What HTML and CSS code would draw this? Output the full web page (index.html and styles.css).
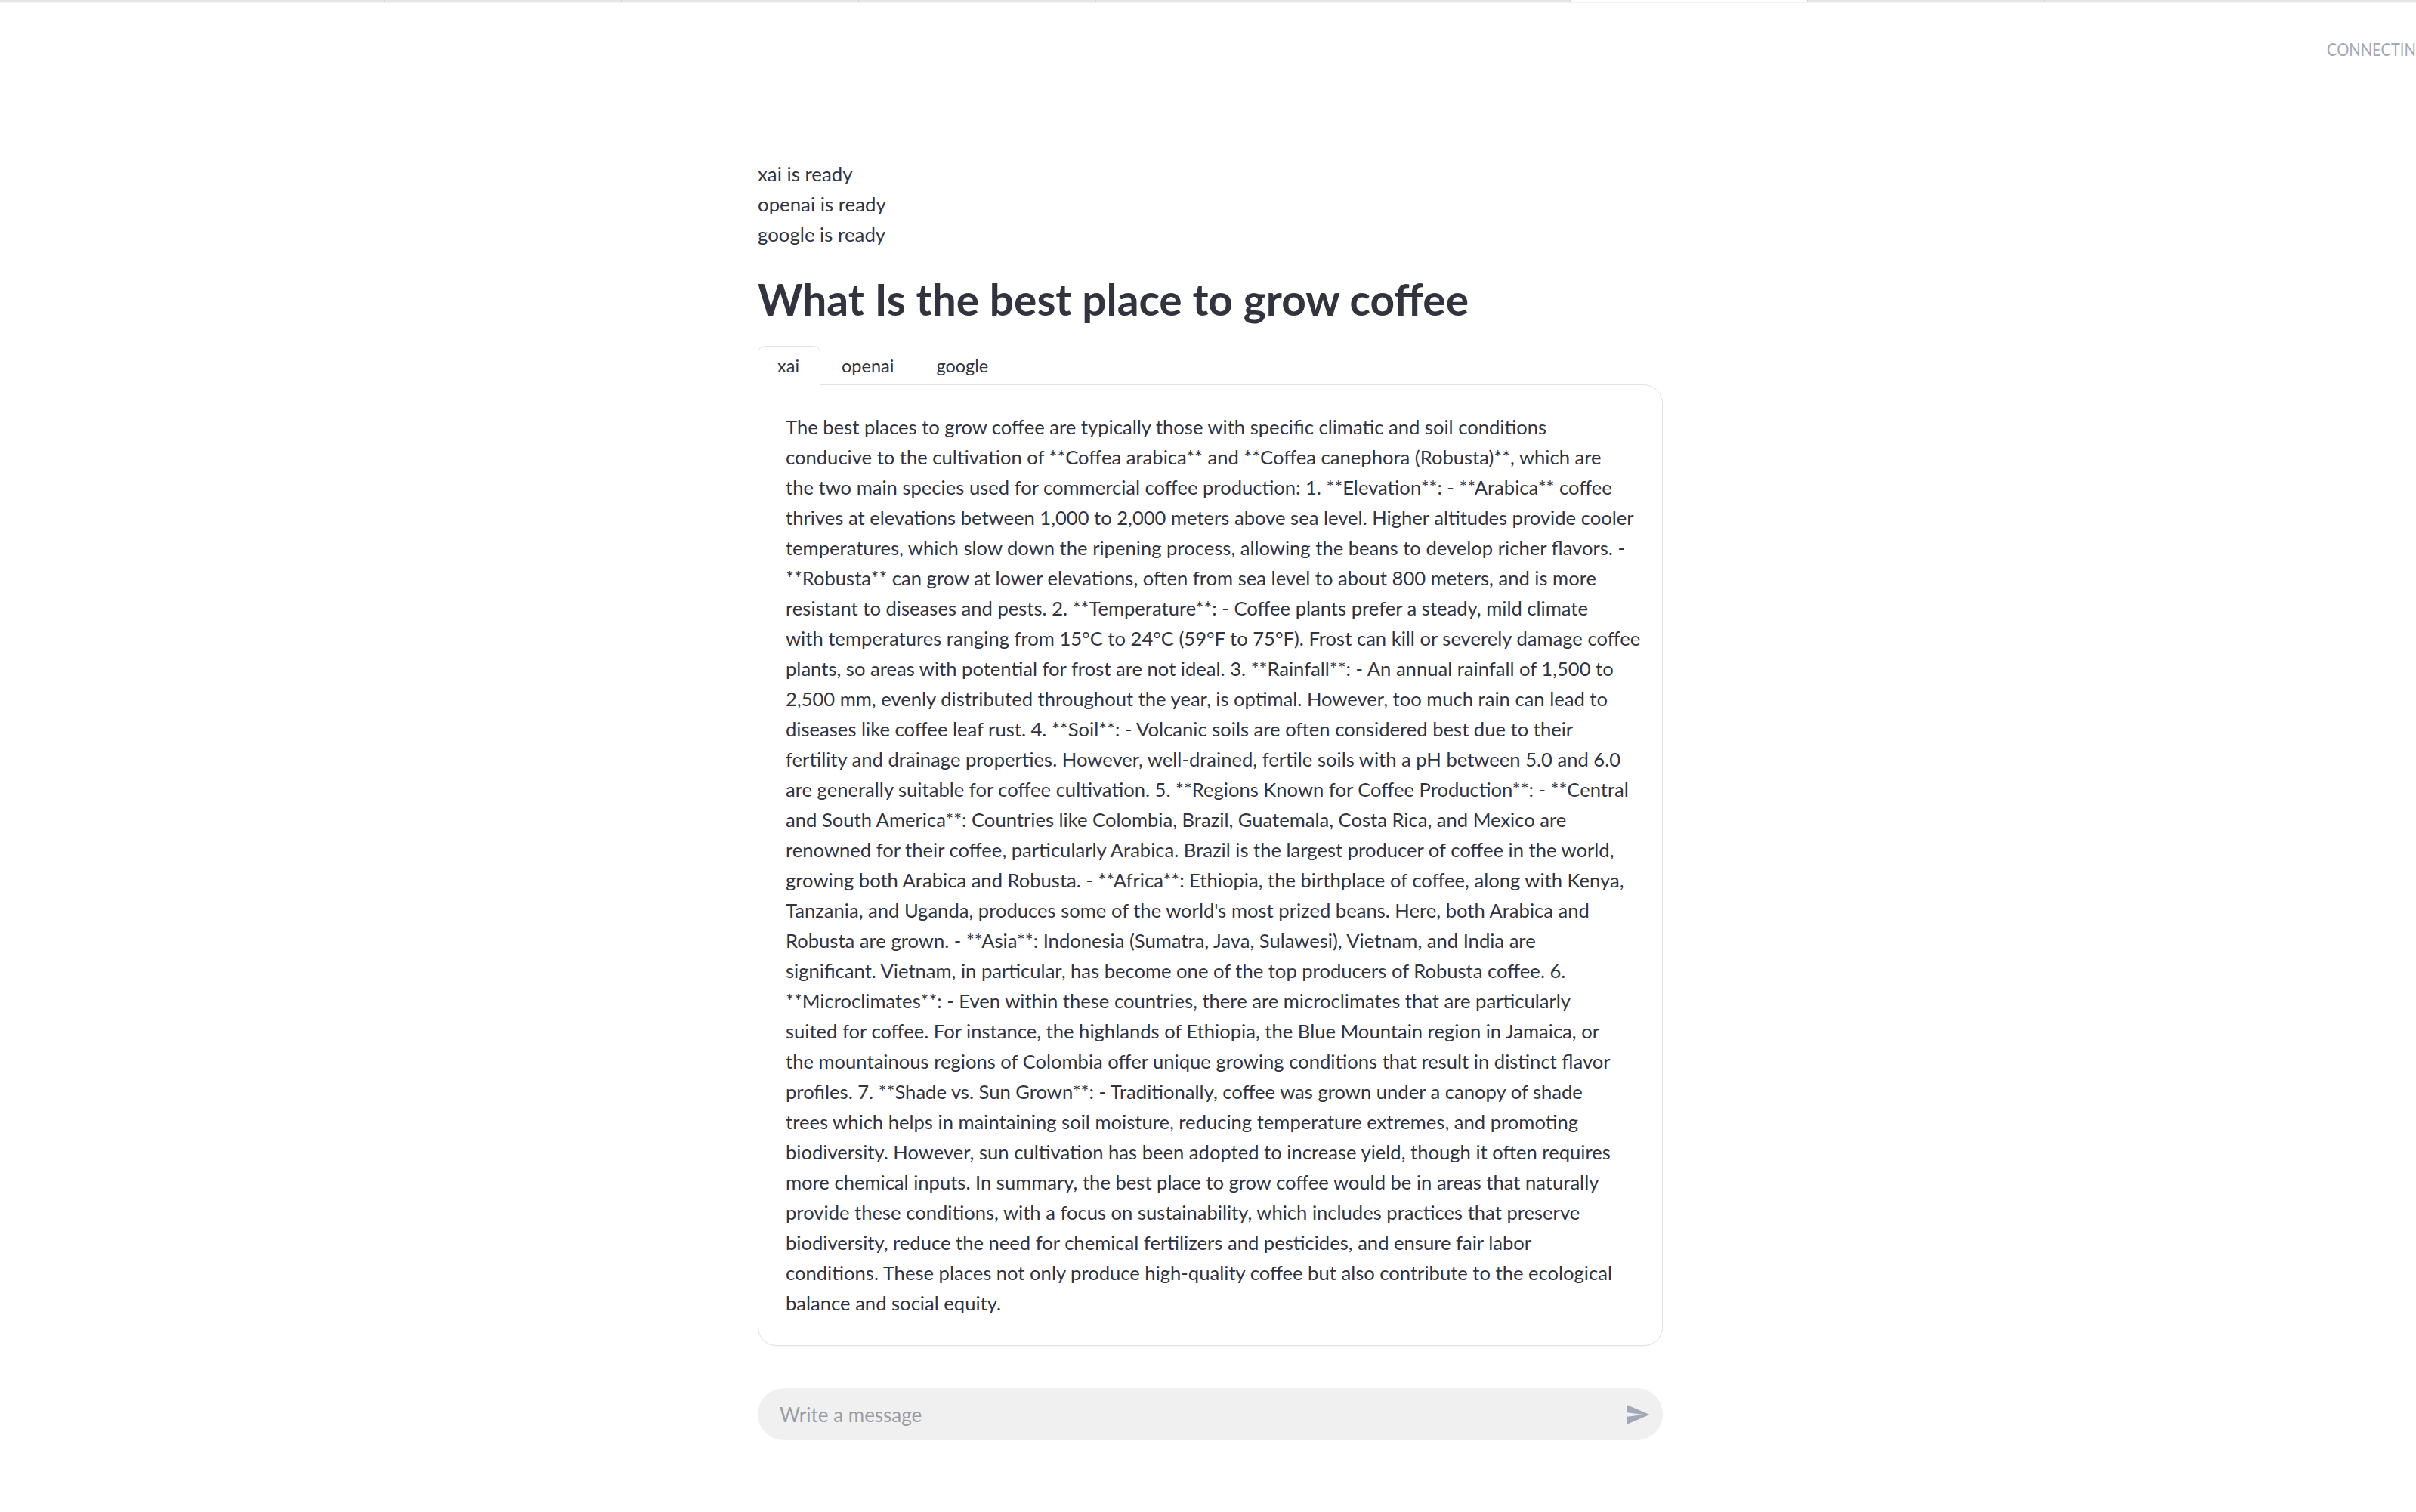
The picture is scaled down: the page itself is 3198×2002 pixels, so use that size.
FILE: index.html
```html
<!DOCTYPE html>
<html lang="en">
<head>
<meta charset="utf-8">
<title>Coffee</title>
<link rel="stylesheet" href="styles.css">
</head>
<body>
<div class="topstrip">
  <span class="seg"></span><span class="seg"></span><span class="seg"></span><span class="seg"></span><span class="seg"></span><span class="seg"></span><span class="seg"></span><span class="seg seg-active"></span><span class="seg"></span><span class="seg"></span><span class="seg"></span>
</div>
<div class="status">CONNECTING</div>
<main class="main">
  <div class="ready">
    <p>xai is ready</p>
    <p>openai is ready</p>
    <p>google is ready</p>
  </div>
  <h1 class="title">What Is the best place to grow coffee</h1>
  <div class="tabs">
    <div class="tab tab-active">xai</div>
    <div class="tab">openai</div>
    <div class="tab">google</div>
  </div>
  <div class="card">
    <p class="answer">The best places to grow coffee are typically those with specific climatic and soil conditions<br>conducive to the cultivation of **Coffea arabica** and **Coffea canephora (Robusta)**, which are<br>the two main species used for commercial coffee production: 1. **Elevation**: - **Arabica** coffee<br>thrives at elevations between 1,000 to 2,000 meters above sea level. Higher altitudes provide cooler<br>temperatures, which slow down the ripening process, allowing the beans to develop richer flavors. -<br>**Robusta** can grow at lower elevations, often from sea level to about 800 meters, and is more<br>resistant to diseases and pests. 2. **Temperature**: - Coffee plants prefer a steady, mild climate<br>with temperatures ranging from 15°C to 24°C (59°F to 75°F). Frost can kill or severely damage coffee<br>plants, so areas with potential for frost are not ideal. 3. **Rainfall**: - An annual rainfall of 1,500 to<br>2,500 mm, evenly distributed throughout the year, is optimal. However, too much rain can lead to<br>diseases like coffee leaf rust. 4. **Soil**: - Volcanic soils are often considered best due to their<br>fertility and drainage properties. However, well-drained, fertile soils with a pH between 5.0 and 6.0<br>are generally suitable for coffee cultivation. 5. **Regions Known for Coffee Production**: - **Central<br>and South America**: Countries like Colombia, Brazil, Guatemala, Costa Rica, and Mexico are<br>renowned for their coffee, particularly Arabica. Brazil is the largest producer of coffee in the world,<br>growing both Arabica and Robusta. - **Africa**: Ethiopia, the birthplace of coffee, along with Kenya,<br>Tanzania, and Uganda, produces some of the world's most prized beans. Here, both Arabica and<br>Robusta are grown. - **Asia**: Indonesia (Sumatra, Java, Sulawesi), Vietnam, and India are<br>significant. Vietnam, in particular, has become one of the top producers of Robusta coffee. 6.<br>**Microclimates**: - Even within these countries, there are microclimates that are particularly<br>suited for coffee. For instance, the highlands of Ethiopia, the Blue Mountain region in Jamaica, or<br>the mountainous regions of Colombia offer unique growing conditions that result in distinct flavor<br>profiles. 7. **Shade vs. Sun Grown**: - Traditionally, coffee was grown under a canopy of shade<br>trees which helps in maintaining soil moisture, reducing temperature extremes, and promoting<br>biodiversity. However, sun cultivation has been adopted to increase yield, though it often requires<br>more chemical inputs. In summary, the best place to grow coffee would be in areas that naturally<br>provide these conditions, with a focus on sustainability, which includes practices that preserve<br>biodiversity, reduce the need for chemical fertilizers and pesticides, and ensure fair labor<br>conditions. These places not only produce high-quality coffee but also contribute to the ecological<br>balance and social equity.</p>
  </div>
  <div class="chat-input">
    <span class="placeholder">Write a message</span>
    <svg class="send" viewBox="0 0 24 24" width="34" height="34" aria-hidden="true"><path d="M2.01 21L23 12 2.01 3 2 10l15 2-15 2z" fill="#a3a8b8"/></svg>
  </div>
</main>
</body>
</html>
```
FILE: styles.css
```css
html, body {
  margin: 0;
  padding: 0;
  background: #ffffff;
  overflow: hidden;
}
body {
  font-family: Lato, "Open Sans", "Noto Sans", sans-serif;
  color: #31333f;
  width: 3198px;
  height: 2002px;
  position: relative;
}
.topstrip {
  display: grid;
  grid-template-columns: 194px repeat(9, 314px) 1fr;
  height: 3px;
  border-bottom: 1px solid #f2f2f2;
}
.seg {
  background: #e6e6e6;
  border-left: 1px solid #d2d2d2;
  border-bottom: 1px solid #d6d6d6;
}
.seg:first-child { border-left: none; }
.seg-active { background: #ffffff; }
.status {
  position: absolute;
  left: 3080px;
  top: 50px;
  font-size: 24px;
  line-height: 30px;
  color: #a3a8b8;
  white-space: nowrap;
  transform: scaleX(0.84);
  transform-origin: left center;
}
.main {
  width: 1198px;
  margin-left: calc(50% - 596px);
  padding-top: 206px;
}
.ready p {
  margin: 0;
  font-size: 25.8px;
  line-height: 40px;
}
.title {
  margin: 30px 0 26px;
  font-size: 56.8px;
  line-height: 72px;
  font-weight: 700;
  color: #31333f;
}
.tabs {
  display: flex;
  height: 52px;
  align-items: stretch;
  position: relative;
  z-index: 1;
  margin-bottom: -1px;
}
.tab {
  padding: 0 27px;
  font-size: 23.5px;
  display: flex;
  align-items: center;
  border: 1px solid transparent;
}
.tab-active {
  border-color: #e3e3e6;
  border-bottom-color: #ffffff;
  background: #ffffff;
  border-radius: 9px 9px 0 0;
  padding: 0 27px 0 25px;
}
.card {
  border: 1px solid #e3e3e6;
  border-radius: 0 25px 25px 25px;
  padding: 35px 34px 36px 36px;
  box-shadow: 0 1px 1px rgba(0,0,0,0.05);
}
.answer {
  margin: 0;
  font-size: 25.6px;
  line-height: 40px;
  white-space: nowrap;
}
.chat-input {
  margin-top: 56px;
  height: 69px;
  border-radius: 35px;
  background: #f0f0f0;
  display: flex;
  align-items: center;
  justify-content: space-between;
  padding: 0 16px 0 29px;
}
.placeholder {
  font-size: 26px;
  color: #9a9ca6;
}
.send { display: block; }
```
